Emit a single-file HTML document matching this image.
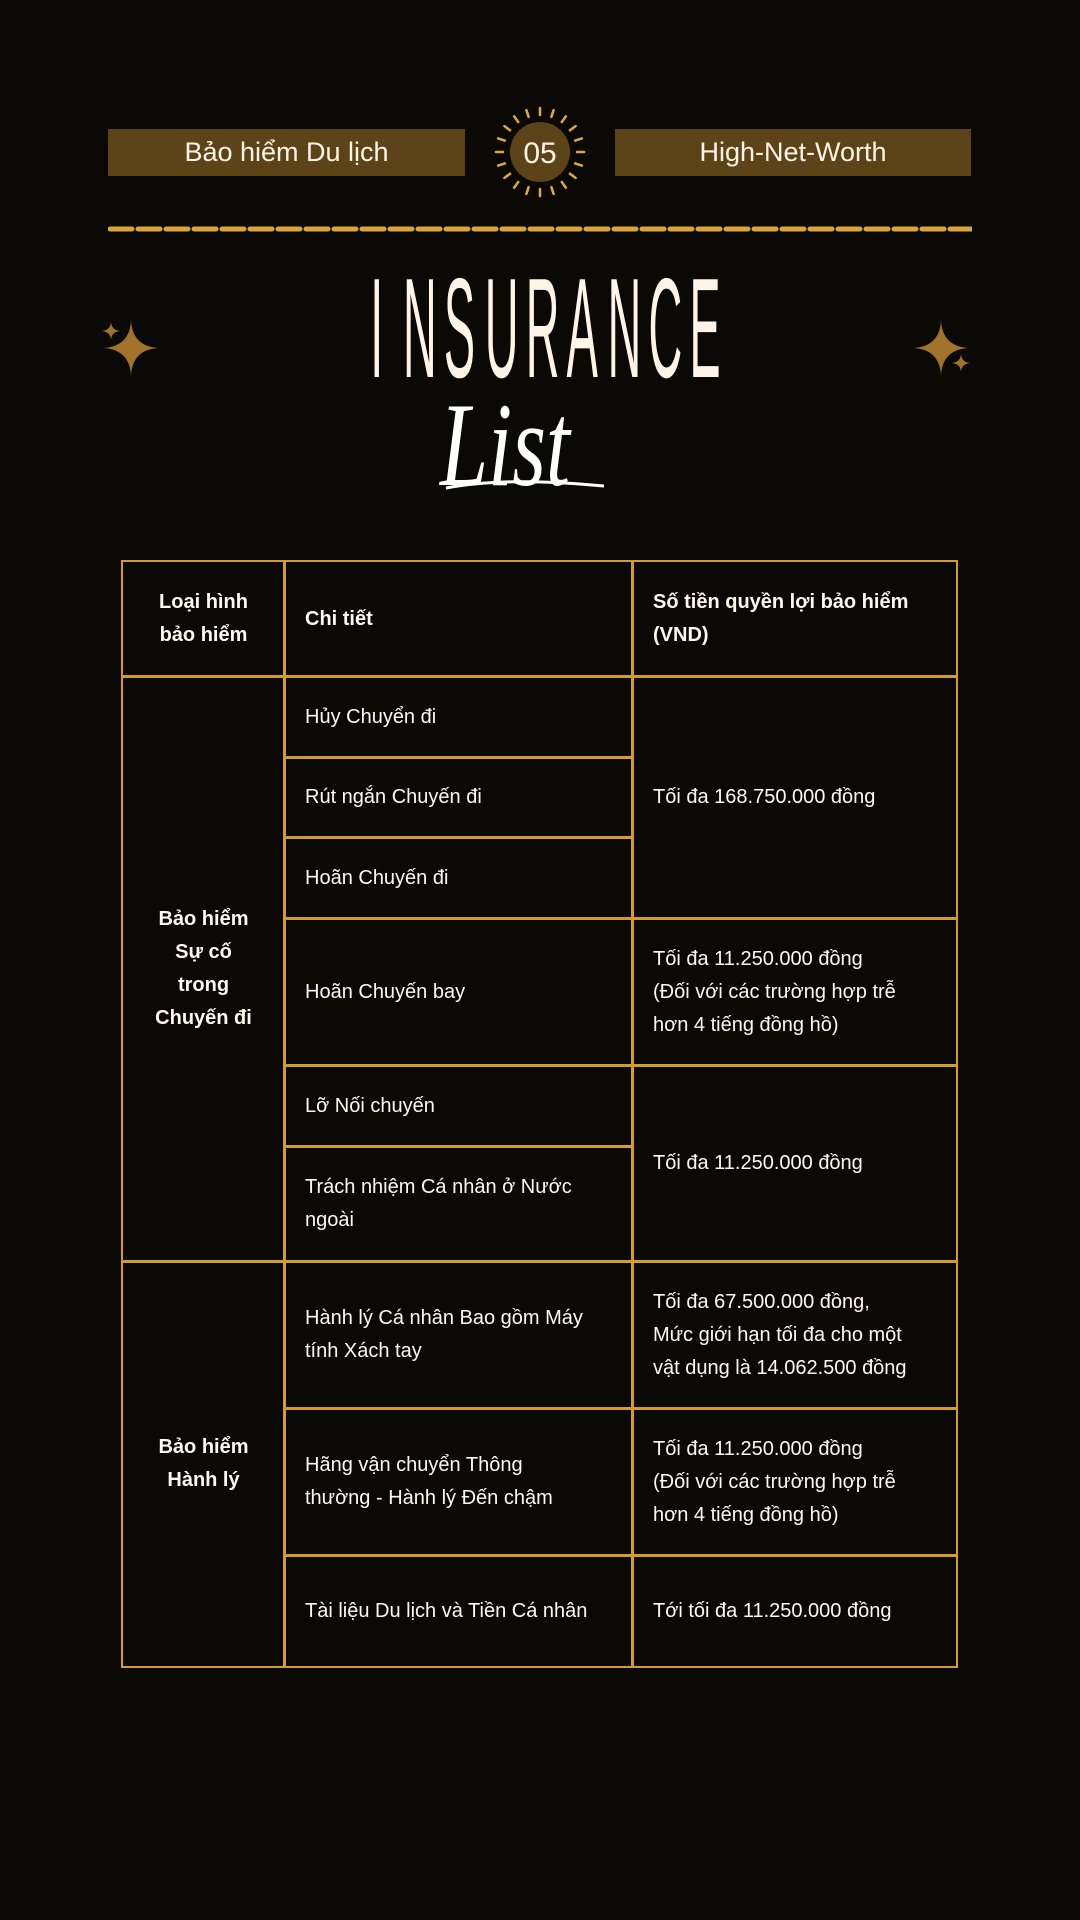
<!DOCTYPE html>
<html><head><meta charset="utf-8"><style>
html,body{margin:0;padding:0;background:#0b0906;}
body{width:1080px;height:1920px;position:relative;overflow:hidden;font-family:"Liberation Sans","Noto Sans CJK SC",sans-serif;color:#fff8ec;}
.box{position:absolute;top:129px;height:47px;background:#5c4318;color:#fff5e6;font-size:27px;display:flex;align-items:center;justify-content:center;}
.c{position:absolute;box-sizing:border-box;border:2.5px solid #d39c2c;display:flex;align-items:center;font-size:20px;line-height:33px;}
.l{padding-left:20px;}
.m{justify-content:center;text-align:center;font-weight:bold;}
.b{font-weight:bold;}
</style></head><body>
<div class="box" style="left:108px;width:357px;">Bảo hiểm Du lịch</div>
<div class="box" style="left:615px;width:356px;">High-Net-Worth</div>
<svg style="position:absolute;left:480px;top:92px" width="120" height="120" viewBox="-60 -60 120 120">
<circle r="30" fill="#5c4318"/>
<g stroke="#e0a93a" stroke-width="2.5" stroke-linecap="round" id="rays"></g>
<text x="0" y="11" text-anchor="middle" font-size="30" fill="#fff5e6" font-family="Liberation Sans">05</text>
</svg>
<svg style="position:absolute;left:108px;top:226px" width="864" height="6"><line x1="2" y1="3" x2="864" y2="3" stroke="#d9a43a" stroke-width="5" stroke-dasharray="22 6" stroke-linecap="round"/></svg>
<svg style="position:absolute;left:0;top:260px" width="1080" height="250">
<g transform="translate(362,117) scale(0.33,1)" font-size="142" font-family="Liberation Sans" fill="#fff5e6">
<text x="25">I</text><text x="124">N</text><text x="248">S</text><text x="372">U</text><text x="496">R</text><text x="620">A</text><text x="744">N</text><text x="868">C</text><text x="992">E</text>
</g>
<text x="440" y="225" font-size="120" font-style="italic" font-family="Liberation Serif" fill="#fff" textLength="130" lengthAdjust="spacingAndGlyphs">List</text>
<path d="M446 228 C 500 218, 560 222, 604 226" stroke="#fff" stroke-width="3" fill="none"/>
</svg>
<svg style="position:absolute;left:0;top:0" width="1080" height="420">
<g fill="#a0722a">
<path d="M131 320 Q132 346 158 348 Q132 350 131 376 Q130 350 104 348 Q130 346 131 320Z"/>
<path d="M111 322 Q111.5 330 120 331 Q111.5 332 111 340 Q110.5 332 102 331 Q110.5 330 111 322Z"/>
<path d="M941 320 Q942 346 968 348 Q942 350 941 376 Q940 350 914 348 Q940 346 941 320Z"/>
<path d="M961 354 Q961.5 362 970 363 Q961.5 364 961 372 Q960.5 364 952 363 Q960.5 362 961 354Z"/>
</g></svg>
<div class="c m" style="left:121px;top:560px;width:165px;height:118px;">Loại hình<br>bảo hiểm</div>
<div class="c l b" style="left:283px;top:560px;width:351px;height:118px;">Chi tiết</div>
<div class="c l b" style="left:631px;top:560px;width:327px;height:118px;">Số tiền quyền lợi bảo hiểm<br>(VND)</div>
<div class="c m" style="left:121px;top:675px;width:165px;height:588px;">Bảo hiểm<br>Sự cố<br>trong<br>Chuyến đi</div>
<div class="c m" style="left:121px;top:1260px;width:165px;height:408px;">Bảo hiểm<br>Hành lý</div>
<div class="c l" style="left:283px;top:675px;width:351px;height:84px;">Hủy Chuyển đi</div>
<div class="c l" style="left:283px;top:756px;width:351px;height:83px;">Rút ngắn Chuyến đi</div>
<div class="c l" style="left:283px;top:836px;width:351px;height:84px;">Hoãn Chuyến đi</div>
<div class="c l" style="left:283px;top:917px;width:351px;height:150px;">Hoãn Chuyến bay</div>
<div class="c l" style="left:283px;top:1064px;width:351px;height:84px;">Lỡ Nối chuyến</div>
<div class="c l" style="left:283px;top:1145px;width:351px;height:118px;">Trách nhiệm Cá nhân ở Nước<br>ngoài</div>
<div class="c l" style="left:283px;top:1260px;width:351px;height:150px;">Hành lý Cá nhân Bao gồm Máy<br>tính Xách tay</div>
<div class="c l" style="left:283px;top:1407px;width:351px;height:150px;">Hãng vận chuyển Thông<br>thường - Hành lý Đến chậm</div>
<div class="c l" style="left:283px;top:1554px;width:351px;height:114px;">Tài liệu Du lịch và Tiền Cá nhân</div>
<div class="c l" style="left:631px;top:675px;width:327px;height:245px;">Tối đa 168.750.000 đồng</div>
<div class="c l" style="left:631px;top:917px;width:327px;height:150px;">Tối đa 11.250.000 đồng<br>(Đối với các trường hợp trễ<br>hơn 4 tiếng đồng hồ)</div>
<div class="c l" style="left:631px;top:1064px;width:327px;height:199px;">Tối đa 11.250.000 đồng</div>
<div class="c l" style="left:631px;top:1260px;width:327px;height:150px;">Tối đa 67.500.000 đồng,<br>Mức giới hạn tối đa cho một<br>vật dụng là 14.062.500 đồng</div>
<div class="c l" style="left:631px;top:1407px;width:327px;height:150px;">Tối đa 11.250.000 đồng<br>(Đối với các trường hợp trễ<br>hơn 4 tiếng đồng hồ)</div>
<div class="c l" style="left:631px;top:1554px;width:327px;height:114px;">Tới tối đa 11.250.000 đồng</div>
<script>
var g=document.getElementById('rays'),s='';
for(var i=0;i<20;i++){var a=i*Math.PI*2/20,c=Math.cos(a),n=Math.sin(a);
s+='<line x1="'+(c*37)+'" y1="'+(n*37)+'" x2="'+(c*44)+'" y2="'+(n*44)+'"/>';}
g.innerHTML=s;
</script>
</body></html>
